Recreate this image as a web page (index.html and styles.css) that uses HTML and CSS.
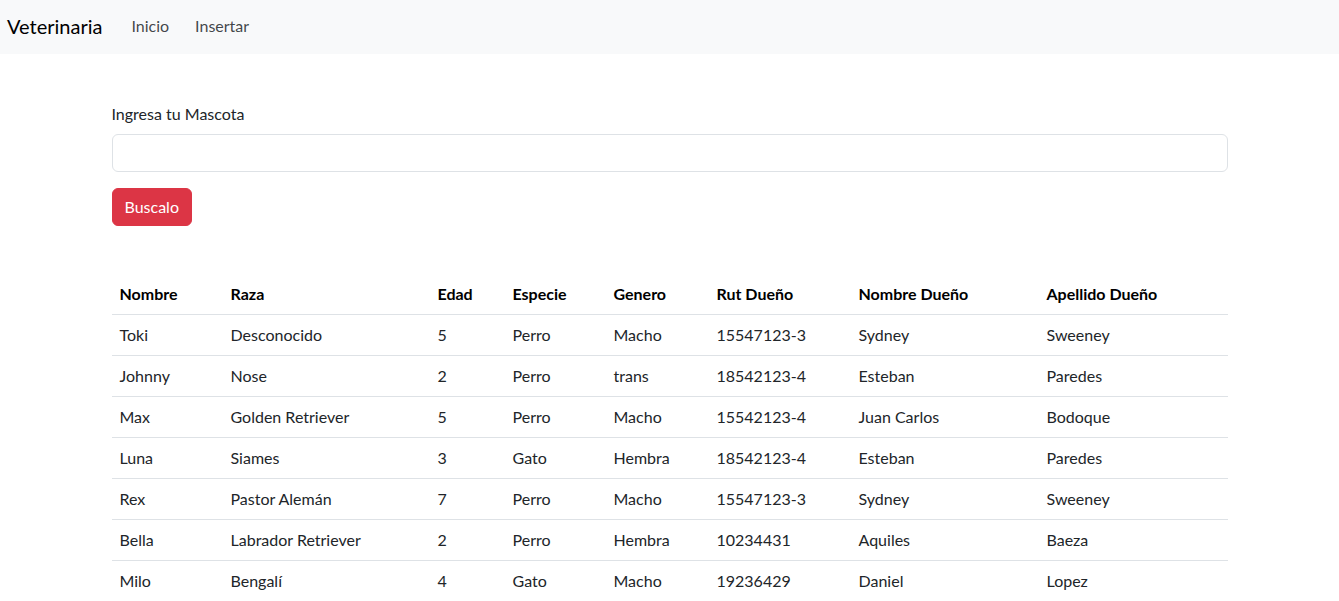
FILE: index.html
```html
<!DOCTYPE html>
<html lang="es">
<head>
<meta charset="utf-8">
<title>Veterinaria</title>
<link rel="stylesheet" href="styles.css">
</head>
<body>
<nav class="navbar">
  <a class="brand" href="#">Veterinaria</a>
  <ul class="nav-links">
    <li><a href="#">Inicio</a></li>
    <li><a href="#">Insertar</a></li>
  </ul>
</nav>
<main class="container">
  <form class="search">
    <label class="form-label" for="mascota">Ingresa tu Mascota</label>
    <input class="form-control" id="mascota" type="text">
    <button class="btn-danger" type="button">Buscalo</button>
  </form>
  <table class="table">
    <colgroup>
      <col class="c1"><col class="c2"><col class="c3"><col class="c4"><col class="c5"><col class="c6"><col class="c7"><col class="c8">
    </colgroup>
    <thead>
      <tr><th>Nombre</th><th>Raza</th><th>Edad</th><th>Especie</th><th>Genero</th><th>Rut Dueño</th><th>Nombre Dueño</th><th>Apellido Dueño</th></tr>
    </thead>
    <tbody>
      <tr><td>Toki</td><td>Desconocido</td><td>5</td><td>Perro</td><td>Macho</td><td>15547123-3</td><td>Sydney</td><td>Sweeney</td></tr>
      <tr><td>Johnny</td><td>Nose</td><td>2</td><td>Perro</td><td>trans</td><td>18542123-4</td><td>Esteban</td><td>Paredes</td></tr>
      <tr><td>Max</td><td>Golden Retriever</td><td>5</td><td>Perro</td><td>Macho</td><td>15542123-4</td><td>Juan Carlos</td><td>Bodoque</td></tr>
      <tr><td>Luna</td><td>Siames</td><td>3</td><td>Gato</td><td>Hembra</td><td>18542123-4</td><td>Esteban</td><td>Paredes</td></tr>
      <tr><td>Rex</td><td>Pastor Alemán</td><td>7</td><td>Perro</td><td>Macho</td><td>15547123-3</td><td>Sydney</td><td>Sweeney</td></tr>
      <tr><td>Bella</td><td>Labrador Retriever</td><td>2</td><td>Perro</td><td>Hembra</td><td>10234431</td><td>Aquiles</td><td>Baeza</td></tr>
      <tr><td>Milo</td><td>Bengalí</td><td>4</td><td>Gato</td><td>Macho</td><td>19236429</td><td>Daniel</td><td>Lopez</td></tr>
    </tbody>
  </table>
</main>
</body>
</html>
```
FILE: styles.css
```css
* { box-sizing: border-box; }
body {
  margin: 0;
  font-family: Lato, "Noto Sans", sans-serif;
  font-size: 16px;
  line-height: 1.5;
  color: #212529;
  background: #fff;
}
.navbar {
  display: flex;
  align-items: center;
  height: 54px;
  padding: 0 7px 2px;
  background: #f8f9fa;
}
.brand {
  font-size: 20px;
  color: #000;
  text-decoration: none;
  margin-right: 16px;
  line-height: 30px;
}
.nav-links {
  display: flex;
  list-style: none;
  margin: 0;
  padding: 0;
}
.nav-links a {
  display: block;
  padding: 8px 13px;
  color: rgba(33, 37, 41, 0.85);
  text-decoration: none;
}
.container {
  max-width: 1140px;
  margin: 0 auto;
  padding: 48px 12px 0;
}
.search {
  display: flex;
  flex-direction: column;
  align-items: flex-start;
}
.form-label {
  margin-bottom: 8px;
}
.form-control {
  width: 100%;
  height: 38px;
  padding: 6px 12px;
  font: inherit;
  border: 1px solid #dee2e6;
  border-radius: 6px;
  background: #fff;
}
.btn-danger {
  margin-top: 16px;
  height: 38px;
  padding: 6px 12px;
  font: inherit;
  color: #fff;
  background: #dc3545;
  border: 1px solid #dc3545;
  border-radius: 6px;
}
.table {
  width: 100%;
  margin-top: 48px;
  border-collapse: collapse;
  table-layout: fixed;
}
.table th, .table td {
  padding: 8px;
  text-align: left;
  border-bottom: 1px solid #dee2e6;
}
.table th { font-weight: 700; color: #000; }
.c1 { width: 111px; }
.c2 { width: 207px; }
.c3 { width: 75px; }
.c4 { width: 101px; }
.c5 { width: 103px; }
.c6 { width: 142px; }
.c7 { width: 188px; }
.c8 { width: 189px; }
```
